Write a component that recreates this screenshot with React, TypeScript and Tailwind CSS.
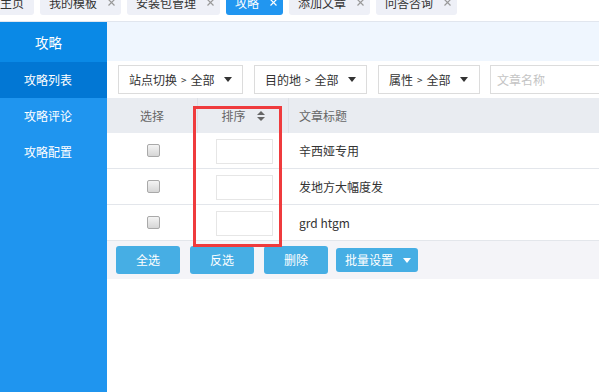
import React from "react";

const X = ({ color = "#999" }: { color?: string }) => (
  <svg width="7" height="7" viewBox="0 0 7 7" className="shrink-0">
    <path d="M0.5 0.5L6.5 6.5M6.5 0.5L0.5 6.5" stroke={color} strokeWidth="1.2" />
  </svg>
);

const Caret = ({ color = "#333" }: { color?: string }) => (
  <svg width="8" height="5" viewBox="0 0 8 5" className="shrink-0">
    <path d="M0 0H8L4 5Z" fill={color} />
  </svg>
);

const Tab = ({ label, active, close = true }: { label: string; active?: boolean; close?: boolean }) => (
  <div
    className={`flex h-[22px] items-end rounded-b-[3px] pb-[6px] pl-[9px] pr-[6px] text-[12px] leading-[12px] ${
      active ? "bg-[#2196f0] text-white" : "bg-[#eef0f7] text-[#333]"
    }`}
  >
    <span>{label}</span>
    {close && (
      <span className="mb-[3px] ml-[11px]">
        <X color={active ? "#ffffff" : "#999"} />
      </span>
    )}
  </div>
);

const Check = () => (
  <div className="h-[13px] w-[13px] rounded-[2px] border border-[#a9a9a9] bg-gradient-to-b from-[#f4f4f4] to-[#d6d6d6]" />
);

const rows = ["辛西娅专用", "发地方大幅度发", "grd htgm"];

export default function App() {
  return (
    <div
      className="relative h-[392px] w-[599px] overflow-hidden bg-white text-[#333]"
      style={{ fontFamily: '"Noto Sans CJK SC", "Noto Sans", sans-serif' }}
    >
      {/* tab bar */}
      <div className="flex h-[22px] items-start gap-[6px] border-b border-[#e1e6ee] pl-0">
        <div className="-mt-[7px] ml-[-10px] flex gap-[6px]">
          <div className="flex h-[22px] items-end rounded-b-[3px] bg-[#eef0f7] pb-[6px] pl-[10px] pr-[10px] text-[12px] leading-[12px] text-[#333]">
            主页
          </div>
          <Tab label="我的模板" />
          <Tab label="安装包管理" />
          <Tab label="攻略" active />
          <Tab label="添加文章" />
          <Tab label="问答咨询" />
        </div>
      </div>

      <div className="flex h-[370px]">
        {/* sidebar */}
        <div className="flex w-[107px] shrink-0 flex-col bg-[#1f95ef] text-[12px] text-white">
          <div className="flex h-[40px] items-center bg-[#0a89e6] pl-[35px] text-[13.5px]">攻略</div>
          <div className="flex h-[36px] items-center bg-[#0277d4] pl-[24px]">攻略列表</div>
          <div className="flex h-[36px] items-center pl-[24px]">攻略评论</div>
          <div className="flex h-[36px] items-center pl-[24px]">攻略配置</div>
        </div>

        {/* content */}
        <div className="flex-1 overflow-hidden">
          <div className="h-[39px] bg-[#eff6fe]" />
          <div className="flex h-[37px] items-start gap-[11px] pl-[11px] pt-[4px] text-[12px]">
            <div className="flex h-[29px] w-[125px] shrink-0 items-center border border-[#dcdcdc] pl-[10px]">
              <span>站点切换</span>
              <span className="mx-[4px] text-[10px]">&gt;</span>
              <span>全部</span>
              <span className="ml-[9px]">
                <Caret />
              </span>
            </div>
            <div className="flex h-[29px] w-[113px] shrink-0 items-center border border-[#dcdcdc] pl-[10px]">
              <span>目的地</span>
              <span className="mx-[4px] text-[10px]">&gt;</span>
              <span>全部</span>
              <span className="ml-[9px]">
                <Caret />
              </span>
            </div>
            <div className="flex h-[29px] w-[102px] shrink-0 items-center border border-[#dcdcdc] pl-[10px]">
              <span>属性</span>
              <span className="mx-[4px] text-[10px]">&gt;</span>
              <span>全部</span>
              <span className="ml-[9px]">
                <Caret />
              </span>
            </div>
            <div className="ml-[-1px] flex h-[29px] w-[140px] shrink-0 items-center border border-[#dcdcdc] pl-[6px] text-[#c4c4c4]">
              文章名称
            </div>
          </div>

          {/* table header */}
          <div className="flex h-[35px] items-center bg-[#e9ecf1] text-[12px] text-[#666]">
            <div className="flex h-full w-[91px] items-center justify-center border-r border-[#dde1e7]">选择</div>
            <div className="flex h-full w-[91px] items-center justify-center gap-[11px] border-r border-[#dde1e7]">
              <span>排序</span>
              <svg width="8" height="10" viewBox="0 0 8 10">
                <path d="M0 4H8L4 0Z M0 6H8L4 10Z" fill="#666" />
              </svg>
            </div>
            <div className="pl-[10px]">文章标题</div>
          </div>

          {rows.map((r) => (
            <div key={r} className="flex h-[36px] items-center border-b border-[#e3e6eb] text-[12px] text-[#333]">
              <div className="flex w-[91px] justify-center pl-[1px]">
                <Check />
              </div>
              <div className="flex w-[91px] justify-center pl-[2px] pt-[1px]">
                <div className="h-[25px] w-[57px] border border-[#e6e6e6] bg-white" />
              </div>
              <div className="pl-[10px]">{r}</div>
            </div>
          ))}

          {/* button bar */}
          <div className="flex h-[38px] items-center bg-[#f4f4f8] pl-[9px] text-[12px] text-white">
            <div className="flex h-[28px] w-[64px] items-center justify-center rounded-[3px] bg-[#46aee4]">全选</div>
            <div className="ml-[10px] flex h-[28px] w-[64px] items-center justify-center rounded-[3px] bg-[#46aee4]">反选</div>
            <div className="ml-[10px] flex h-[28px] w-[64px] items-center justify-center rounded-[3px] bg-[#46aee4]">删除</div>
            <div className="ml-[8px] flex h-[24px] w-[82px] items-center rounded-[3px] bg-[#46aee4] pl-[9px]">
              <span>批量设置</span>
              <span className="ml-[10px]">
                <Caret color="#ffffff" />
              </span>
            </div>
          </div>
        </div>
      </div>

      {/* red highlight annotation */}
      <div className="absolute left-[193px] top-[106px] h-[141px] w-[89px] border-[3px] border-[#ef3b3d]" />
    </div>
  );
}
